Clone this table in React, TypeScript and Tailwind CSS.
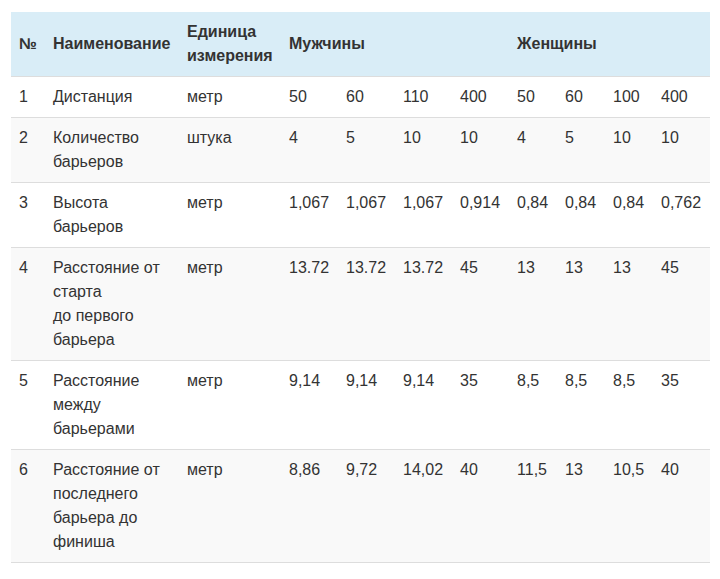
import React from "react";

type Row = {
  n: number;
  name: string[];
  unit: string;
  men: string[];
  women: string[];
};

const rows: Row[] = [
  { n: 1, name: ["Дистанция"], unit: "метр", men: ["50", "60", "110", "400"], women: ["50", "60", "100", "400"] },
  { n: 2, name: ["Количество", "барьеров"], unit: "штука", men: ["4", "5", "10", "10"], women: ["4", "5", "10", "10"] },
  { n: 3, name: ["Высота", "барьеров"], unit: "метр", men: ["1,067", "1,067", "1,067", "0,914"], women: ["0,84", "0,84", "0,84", "0,762"] },
  { n: 4, name: ["Расстояние от", "старта", "до первого", "барьера"], unit: "метр", men: ["13.72", "13.72", "13.72", "45"], women: ["13", "13", "13", "45"] },
  { n: 5, name: ["Расстояние", "между", "барьерами"], unit: "метр", men: ["9,14", "9,14", "9,14", "35"], women: ["8,5", "8,5", "8,5", "35"] },
  { n: 6, name: ["Расстояние от", "последнего", "барьера до", "финиша"], unit: "метр", men: ["8,86", "9,72", "14,02", "40"], women: ["11,5", "13", "10,5", "40"] },
];

const widths = ["w-[34px]", "w-[134px]", "w-[102px]", "w-[57px]", "w-[57px]", "w-[57px]", "w-[57px]", "w-[48px]", "w-[48px]", "w-[48px]", "w-[57px]"];

export default function App() {
  return (
    <div className="min-h-[579px] bg-white pt-[12px] pl-[11px] font-['Liberation_Sans',Arial,sans-serif] text-[16px] leading-[24px] text-[#333]">
      <table className="w-[699px] table-fixed border-collapse">
        <colgroup>
          {widths.map((w, i) => (
            <col key={i} className={w} />
          ))}
        </colgroup>
        <thead>
          <tr className="bg-[#d9edf7] border-b border-[#dddddd]">
            <th className="px-2 py-2 text-left align-middle font-bold whitespace-nowrap">№</th>
            <th className="px-2 py-2 text-left align-middle font-bold whitespace-nowrap">Наименование</th>
            <th className="px-2 py-2 text-left align-middle font-bold whitespace-nowrap">
              Единица
              <br />
              измерения
            </th>
            <th colSpan={4} className="px-2 py-2 text-left align-middle font-bold">Мужчины</th>
            <th colSpan={4} className="px-2 py-2 text-left align-middle font-bold">Женщины</th>
          </tr>
        </thead>
        <tbody>
          {rows.map((row) => (
            <tr key={row.n} className={`border-b border-[#dddddd] ${row.n % 2 === 0 ? "bg-[#f9f9f9]" : "bg-white"}`}>
              <td className="px-2 py-2 align-top">{row.n}</td>
              <td className="px-2 py-2 align-top whitespace-nowrap">
                {row.name.map((line, i) => (
                  <div key={i}>{line}</div>
                ))}
              </td>
              <td className="px-2 py-2 align-top">{row.unit}</td>
              {[...row.men, ...row.women].map((value, i) => (
                <td key={i} className="px-2 py-2 align-top whitespace-nowrap">{value}</td>
              ))}
            </tr>
          ))}
        </tbody>
      </table>
    </div>
  );
}
